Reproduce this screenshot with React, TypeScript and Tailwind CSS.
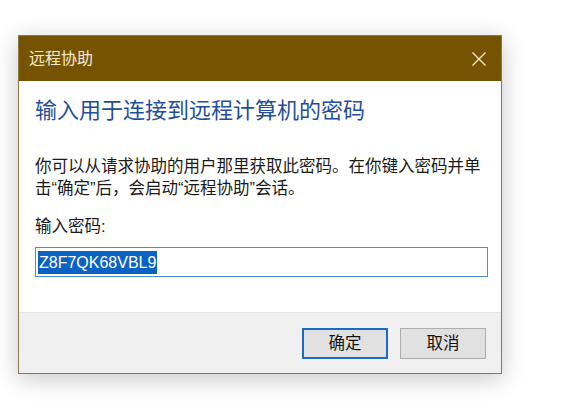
export default function App() {
  const font = {
    fontFamily: '"Liberation Sans", "Noto Sans CJK SC", sans-serif',
  };

  return (
    <div className="min-h-[409px] w-[571px] bg-white pt-[35px] pl-[18px]" style={font}>
      <div className="flex h-[339px] w-[484px] flex-col border border-[#8c7a45] bg-white shadow-[0_5px_22px_rgba(0,0,0,0.22)]">
        {/* title bar */}
        <div className="flex h-[45px] items-center justify-between bg-[#765300] pl-[10px] pr-[14px]">
          <span className="text-[16px] text-[#f6ecd2]">远程协助</span>
          <svg width="16" height="16" viewBox="0 0 16 16" className="text-[#f6ecd2]">
            <path d="M1.5 1.5 L14.5 14.5 M14.5 1.5 L1.5 14.5" stroke="currentColor" strokeWidth="1.3" fill="none" />
          </svg>
        </div>

        {/* body */}
        <div className="flex flex-1 flex-col px-[16px] pt-[15px]">
          <h1 className="text-[22px] leading-[30px] text-[#1f4e9c]">输入用于连接到远程计算机的密码</h1>
          <p className="mt-[29px] text-[16.5px] leading-[22px] text-[#1a1a1a]">
            你可以从请求协助的用户那里获取此密码。在你键入密码并单击“确定”后，会启动“远程协助”会话。
          </p>
          <label className="mt-[16px] text-[16.5px] leading-[22px] text-[#1a1a1a]">输入密码:</label>
          <div className="mt-[10px] flex h-[30px] w-[453px] items-center border border-[#4a8fd0] px-[2px]">
            <span className="bg-[#0a63c4] px-[1px] text-[16px] leading-[23px] text-white">Z8F7QK68VBL9</span>
          </div>
        </div>

        {/* footer */}
        <div className="flex h-[61px] justify-end gap-[12px] border-t border-[#e4e4e4] bg-[#f0f0f0] pt-[15px] pr-[15px]">
          <button className="h-[31px] w-[86px] border-2 border-[#1a6ac6] bg-[#e1e1e1] text-[16.5px] text-[#111]">确定</button>
          <button className="h-[31px] w-[86px] border border-[#adadad] bg-[#e1e1e1] text-[16.5px] text-[#111]">取消</button>
        </div>
      </div>
    </div>
  );
}
